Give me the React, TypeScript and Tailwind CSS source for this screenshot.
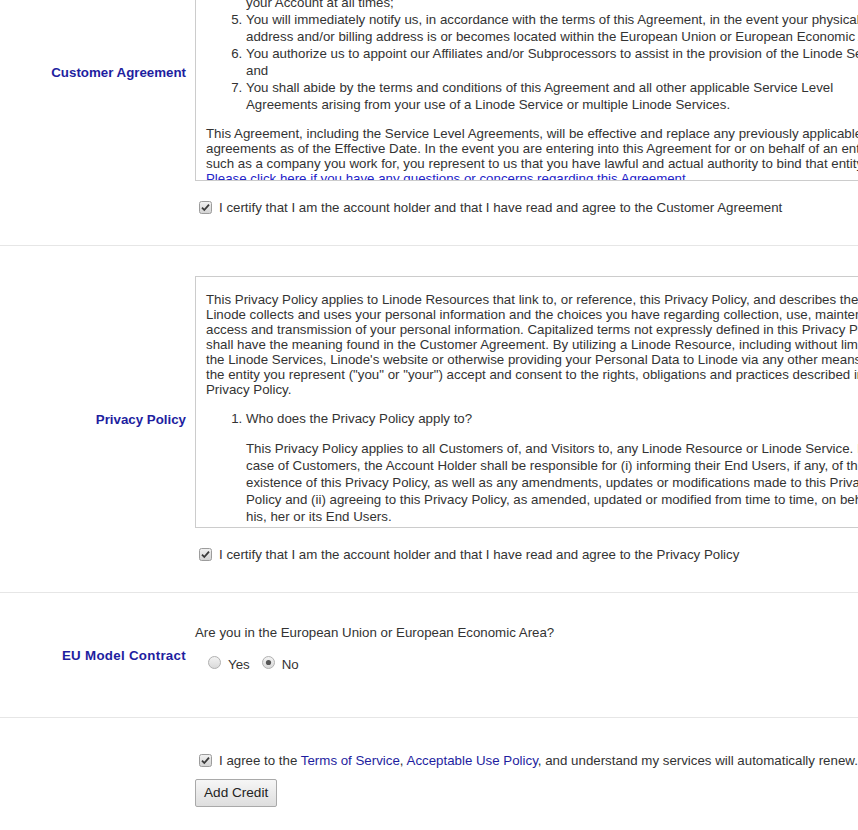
import React from 'react';

const Check = () => (
  <span className="inline-block w-[13px] h-[13px] shrink-0">
    <svg width="13" height="13" viewBox="0 0 13 13">
      <defs>
        <linearGradient id="cb" x1="0" y1="0" x2="0" y2="1">
          <stop offset="0" stopColor="#f2f2f2" />
          <stop offset="1" stopColor="#d2d2d2" />
        </linearGradient>
      </defs>
      <rect x="0.5" y="0.5" width="12" height="12" rx="2" fill="url(#cb)" stroke="#9c9c9c" />
      <path d="M3 6.6 L5.3 9 L10 3.6" fill="none" stroke="#3a3a3a" strokeWidth="1.8" />
    </svg>
  </span>
);

const Radio = ({ on }: { on?: boolean }) => (
  <span className="inline-block w-[13px] h-[13px] shrink-0">
    <svg width="13" height="13" viewBox="0 0 13 13">
      <defs>
        <linearGradient id="rb" x1="0" y1="0" x2="0" y2="1">
          <stop offset="0" stopColor="#f4f4f4" />
          <stop offset="1" stopColor="#d8d8d8" />
        </linearGradient>
      </defs>
      <circle cx="6.5" cy="6.5" r="6" fill="url(#rb)" stroke="#b0b0b0" />
      {on && <circle cx="6.5" cy="6.5" r="2.6" fill="#555" />}
    </svg>
  </span>
);

const Label = ({ children, className = '' }: { children: React.ReactNode; className?: string }) => (
  <div className={`w-[186px] shrink-0 text-right font-bold text-[#1e1ea0] leading-[17px] ${className}`}>{children}</div>
);

const CheckLine = ({ children }: { children: React.ReactNode }) => (
  <div className="flex items-center pl-[4px] leading-[17px] whitespace-nowrap">
    <Check />
    <span className="ml-[7px]">{children}</span>
  </div>
);

export default function App() {
  return (
    <div
      className="w-[858px] h-[830px] overflow-hidden bg-white text-[13.3px] text-[#333]"
      style={{ fontFamily: '"Liberation Sans", Arial, sans-serif' }}
    >
      <div className="-mt-[101px]">
        {/* Customer Agreement */}
        <div className="flex items-center pt-[30px] pb-[29px]">
          <Label>Customer Agreement</Label>
          <div className="ml-[9px] flex-1 min-w-0">
            <div className="w-[720px] h-[252px] border border-[#cccccc] overflow-hidden px-[10px] whitespace-nowrap">
              <div className="pt-[64px] pl-[40px] leading-[17px]">your Account at all times;</div>
              <ol start={5} className="list-decimal pl-[40px] leading-[17px]">
                <li>
                  You will immediately notify us, in accordance with the terms of this Agreement, in the event your physical
                  <br />
                  address and/or billing address is or becomes located within the European Union or European Economic Area;
                </li>
                <li>
                  You authorize us to appoint our Affiliates and/or Subprocessors to assist in the provision of the Linode Services;
                  <br />
                  and
                </li>
                <li>
                  You shall abide by the terms and conditions of this Agreement and all other applicable Service Level
                  <br />
                  Agreements arising from your use of a Linode Service or multiple Linode Services.
                </li>
              </ol>
              <p className="mt-[13px] leading-[15px]">
                This Agreement, including the Service Level Agreements, will be effective and replace any previously applicable
                <br />
                agreements as of the Effective Date. In the event you are entering into this Agreement for or on behalf of an entity,
                <br />
                such as a company you work for, you represent to us that you have lawful and actual authority to bind that entity.
                <br />
                <a className="text-[#2323c8]">Please click here if you have any questions or concerns regarding this Agreement.</a>
              </p>
            </div>
            <div className="mt-[18px]">
              <CheckLine>I certify that I am the account holder and that I have read and agree to the Customer Agreement</CheckLine>
            </div>
          </div>
        </div>

        {/* Privacy Policy */}
        <div className="flex items-center border-t border-[#e6e6e6] pt-[30px] pb-[29px]">
          <Label>Privacy Policy</Label>
          <div className="ml-[9px] flex-1 min-w-0">
            <div className="w-[720px] h-[252px] border border-[#cccccc] overflow-hidden px-[10px] pt-[15px] whitespace-nowrap">
              <p className="leading-[15px]">
                This Privacy Policy applies to Linode Resources that link to, or reference, this Privacy Policy, and describes the way
                <br />
                Linode collects and uses your personal information and the choices you have regarding collection, use, maintenance,
                <br />
                access and transmission of your personal information. Capitalized terms not expressly defined in this Privacy Policy
                <br />
                shall have the meaning found in the Customer Agreement. By utilizing a Linode Resource, including without limitation
                <br />
                the Linode Services, Linode's website or otherwise providing your Personal Data to Linode via any other means, you or
                <br />
                the entity you represent ("you" or "your") accept and consent to the rights, obligations and practices described in this
                <br />
                Privacy Policy.
              </p>
              <ol className="list-decimal pl-[40px] mt-[13px] leading-[17px]">
                <li>
                  Who does the Privacy Policy apply to?
                  <p className="mt-[13px]">
                    This Privacy Policy applies to all Customers of, and Visitors to, any Linode Resource or Linode Service.{' '}
                    <span className="text-[#f0a23c]">In</span> the
                    <br />
                    case of Customers, the Account Holder shall be responsible for (i) informing their End Users, if any, of the
                    <br />
                    existence of this Privacy Policy, as well as any amendments, updates or modifications made to this Privacy
                    <br />
                    Policy and (ii) agreeing to this Privacy Policy, as amended, updated or modified from time to time, on behalf of
                    <br />
                    his, her or its End Users.
                  </p>
                </li>
              </ol>
            </div>
            <div className="mt-[18px]">
              <CheckLine>I certify that I am the account holder and that I have read and agree to the Privacy Policy</CheckLine>
            </div>
          </div>
        </div>

        {/* EU Model Contract */}
        <div className="flex items-start border-t border-[#e6e6e6] pt-[31px] pb-[44px]">
          <Label className="pt-[23px] tracking-[0.3px]">EU Model Contract</Label>
          <div className="ml-[9px] flex-1 min-w-0">
            <div className="leading-[17px]">Are you in the European Union or European Economic Area?</div>
            <div className="mt-[15px] flex items-center leading-[17px]">
              <span className="ml-[13px]"><Radio /></span>
              <span className="ml-[7px]">Yes</span>
              <span className="ml-[12px]"><Radio on /></span>
              <span className="ml-[7px]">No</span>
            </div>
          </div>
        </div>

        {/* Agree + submit */}
        <div className="flex items-start border-t border-[#e6e6e6] pt-[34px]">
          <div className="w-[186px] shrink-0" />
          <div className="ml-[9px] flex-1 min-w-0">
            <CheckLine>
              I agree to the <a className="text-[#1e1ea0]">Terms of Service</a>,{' '}
              <a className="text-[#1e1ea0]">Acceptable Use Policy</a>, and understand my services will automatically renew.
            </CheckLine>
            <button className="mt-[10px] h-[28px] px-[8px] text-[13.6px] text-[#222] border border-[#a9a9a9] rounded-[2px] bg-gradient-to-b from-[#f6f6f6] to-[#dedede]">
              Add Credit
            </button>
          </div>
        </div>
      </div>
    </div>
  );
}
